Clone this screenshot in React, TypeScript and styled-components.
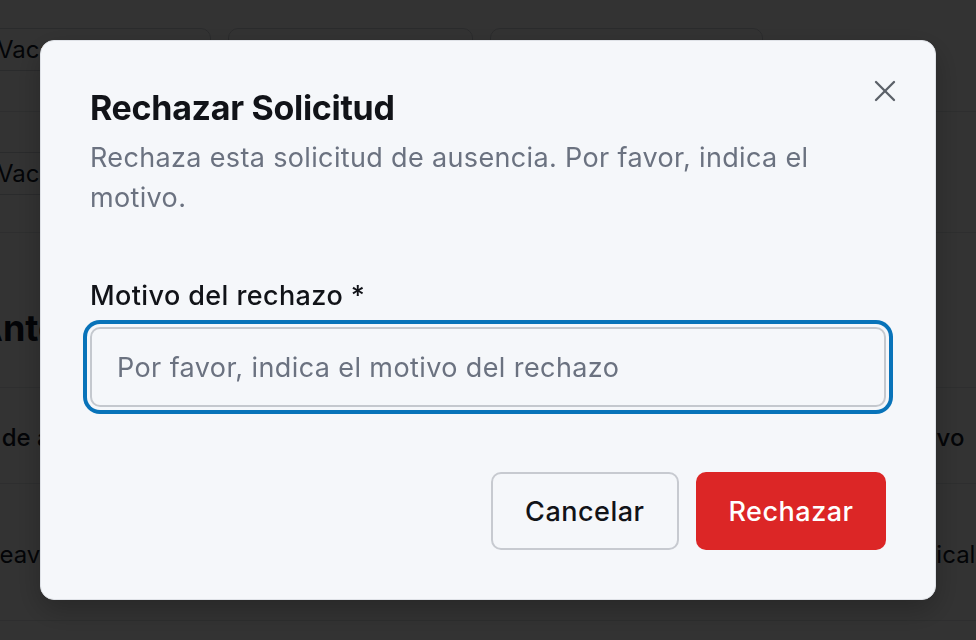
import React from "react";
import styled, { createGlobalStyle, css } from "styled-components";

const GlobalStyle = createGlobalStyle`
  * { box-sizing: border-box; }
  html, body {
    margin: 0;
    padding: 0;
    background: #ffffff;
    overflow: hidden;
  }
  body {
    font-family: Inter, "Noto Sans", "Liberation Sans", sans-serif;
    color: #111827;
  }
`;

/* page behind the dialog (scrolled a little to the right) */

const Page = styled.div`
  width: 1040px;
  margin-left: -24px;
  background: #ffffff;
`;

const FilterRow = styled.div<{ $top: number; $height: number }>`
  display: flex;
  align-items: flex-start;
  gap: 17px;
  height: ${(p) => p.$height}px;
  padding-top: ${(p) => p.$top}px;
  border-bottom: 1px solid #e5e7eb;
`;

const SelectBox = styled.div<{ $width: number }>`
  display: flex;
  align-items: center;
  justify-content: space-between;
  width: ${(p) => p.$width}px;
  height: 43px;
  padding: 0 20px;
  border: 1px solid #d1d5db;
  border-radius: 10px;
  font-size: 24px;
  color: #111827;
`;

const Section = styled.div`
  height: 154px;
  padding-top: 73px;
`;

const SectionTitle = styled.h2`
  margin: 0;
  font-size: 36px;
  line-height: 44px;
  font-weight: 700;
  color: #111827;
`;

const Table = styled.div`
  margin-left: -45px;
`;

const TableRow = styled.div<{ $height: number; $head?: boolean }>`
  display: grid;
  grid-template-columns: 300px 280px 1fr 130px;
  align-items: center;
  height: ${(p) => p.$height}px;
  padding-top: 4px;
  border-top: 1px solid #e5e7eb;
  font-size: 24px;
  font-weight: ${(p) => (p.$head ? 500 : 400)};
  color: #111827;
  white-space: nowrap;
`;

/* dialog */

const Overlay = styled.div`
  position: fixed;
  inset: 0;
  display: flex;
  align-items: center;
  justify-content: center;
  background: rgba(0, 0, 0, 0.8);
`;

const Dialog = styled.div`
  position: relative;
  display: flex;
  flex-direction: column;
  width: 896px;
  height: 560px;
  padding: 50px 49px 51px;
  background: #f5f7fa;
  border: 1px solid #dfe2e7;
  border-radius: 14px;
  box-shadow: 0 10px 30px rgba(0, 0, 0, 0.25);
`;

const CloseButton = styled.button`
  position: absolute;
  top: 39px;
  right: 39px;
  display: flex;
  padding: 0;
  border: none;
  background: none;
  color: #5b6068;
  cursor: pointer;
`;

const Title = styled.h2`
  margin: 0;
  font-size: 34px;
  line-height: 33px;
  font-weight: 700;
  letter-spacing: -0.3px;
  color: #111318;
`;

const Description = styled.p`
  margin: 14px 0 0;
  font-size: 27px;
  line-height: 40px;
  letter-spacing: 0.35px;
  color: #6b7280;
`;

const Field = styled.div`
  display: flex;
  flex-direction: column;
  gap: 18px;
  margin-top: 65px;
`;

const Label = styled.label`
  font-size: 27px;
  line-height: 26px;
  font-weight: 500;
  letter-spacing: 0.4px;
  color: #111318;
`;

const Input = styled.input`
  width: 100%;
  height: 80px;
  padding: 0 25px;
  border: 2px solid #c4c8ce;
  border-radius: 10px;
  background: #f5f7fa;
  font-family: inherit;
  font-size: 27px;
  letter-spacing: 0.4px;
  color: #111827;
  outline: none;
  box-shadow: 0 0 0 3px #f5f7fa, 0 0 0 7px #0873b9;
  &::placeholder {
    color: #6b7280;
  }
`;

const Footer = styled.div`
  display: flex;
  justify-content: flex-end;
  gap: 17px;
  margin-top: 65px;
`;

const Button = styled.button<{ $variant: "outline" | "danger" }>`
  height: 78px;
  padding: 0 32.5px;
  border-radius: 10px;
  font-family: inherit;
  font-size: 27px;
  font-weight: 500;
  letter-spacing: 0.5px;
  cursor: pointer;
  ${(p) =>
    p.$variant === "danger"
      ? css`
          border: none;
          background: #dc2626;
          color: #ffffff;
        `
      : css`
          border: 2px solid #c7cad0;
          background: #f5f7fa;
          color: #111318;
        `}
`;

const filterBoxes = [
  { width: 235, text: "Vacaciones" },
  { width: 245, text: "01/07/2024" },
  { width: 273, text: "15/07/2024" },
];

function CloseIcon() {
  return (
    <svg width="22" height="22" viewBox="0 0 22 22" fill="none" stroke="currentColor" strokeWidth="2.3" strokeLinecap="round">
      <path d="M2 2 L20 20" />
      <path d="M20 2 L2 20" />
    </svg>
  );
}

export default function App() {
  return (
    <>
      <GlobalStyle />
      <Page>
        <FilterRow $top={28} $height={112}>
          {filterBoxes.map((b, i) => (
            <SelectBox key={i} $width={b.width}>{b.text}</SelectBox>
          ))}
        </FilterRow>
        <FilterRow $top={40} $height={121}>
          {filterBoxes.map((b, i) => (
            <SelectBox key={i} $width={b.width}>{b.text}</SelectBox>
          ))}
        </FilterRow>
        <Section>
          <SectionTitle>Antecedentes</SectionTitle>
        </Section>
        <Table>
          <TableRow $height={96} $head>
            <span>Clase de ausencia</span>
            <span>Fechas</span>
            <span>Días</span>
            <span>Motivo</span>
          </TableRow>
          <TableRow $height={137}>
            <span>Sick Leave</span>
            <span>01/07 - 05/07</span>
            <span>5</span>
            <span>Medical</span>
          </TableRow>
          <TableRow $height={60} />
        </Table>
      </Page>

      <Overlay>
        <Dialog role="dialog">
          <CloseButton aria-label="Cerrar">
            <CloseIcon />
          </CloseButton>
          <Title>Rechazar Solicitud</Title>
          <Description>
            Rechaza esta solicitud de ausencia. Por favor, indica el motivo.
          </Description>
          <Field>
            <Label htmlFor="motivo">Motivo del rechazo *</Label>
            <Input id="motivo" placeholder="Por favor, indica el motivo del rechazo" />
          </Field>
          <Footer>
            <Button $variant="outline">Cancelar</Button>
            <Button $variant="danger">Rechazar</Button>
          </Footer>
        </Dialog>
      </Overlay>
    </>
  );
}
